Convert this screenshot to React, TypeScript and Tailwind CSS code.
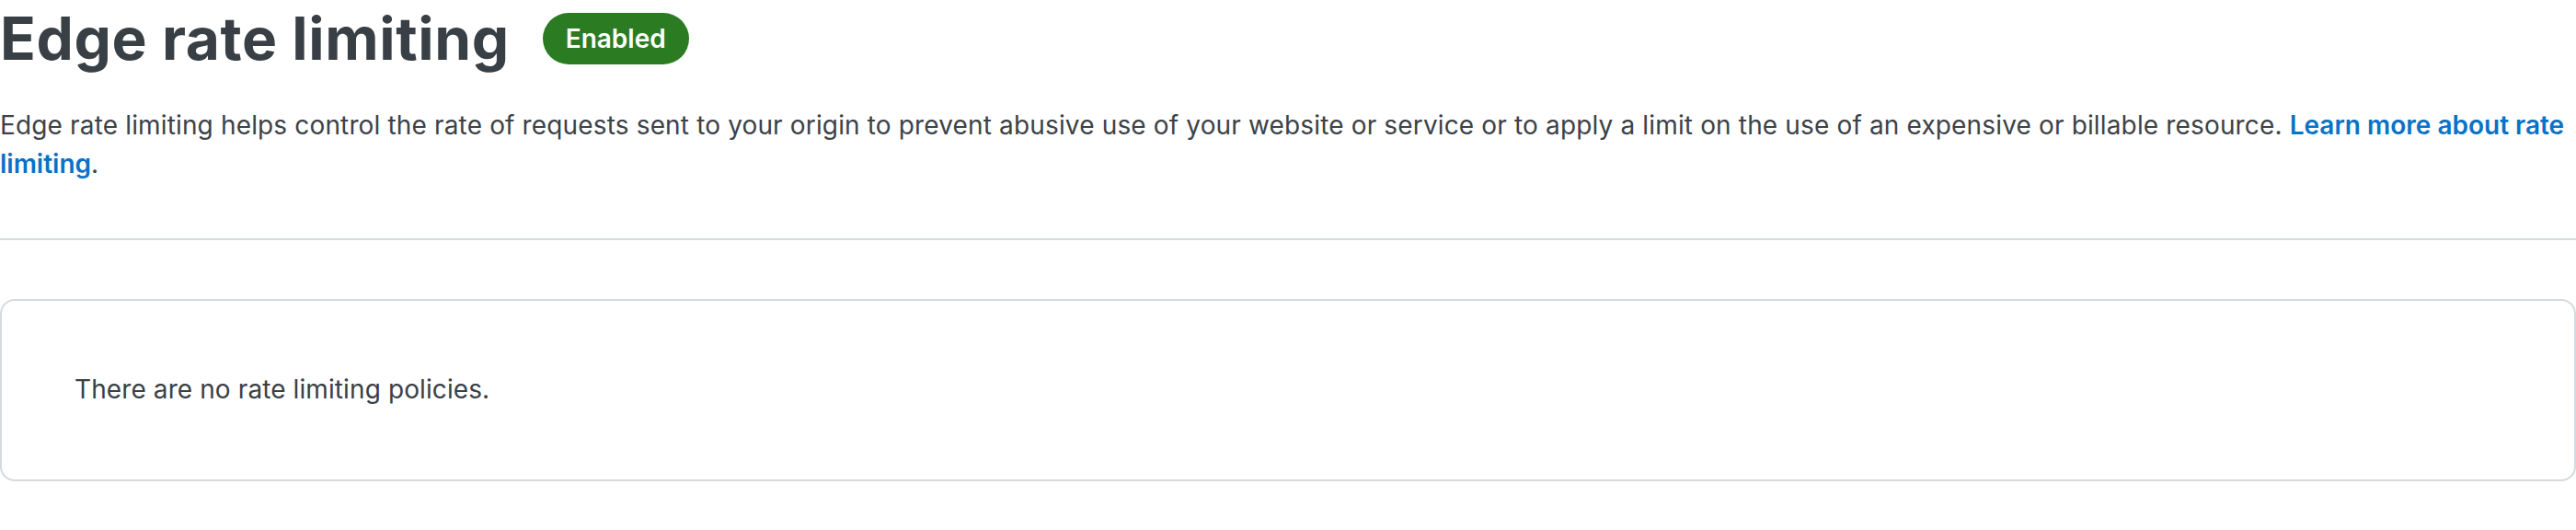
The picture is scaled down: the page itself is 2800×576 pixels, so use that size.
import React from 'react';

const StatusBadge: React.FC<{ label: string }> = ({ label }) => (
  <span className="inline-flex items-center rounded-full bg-[#2a7b22] px-[25px] py-[7px] text-[28px] leading-[42px] font-semibold text-white">
    {label}
  </span>
);

const EmptyPolicies: React.FC = () => (
  <div className="mt-[64px] rounded-[16px] border-2 border-[#d6dadd] pt-[75px] pb-[77px] px-[79px]">
    <p className="text-[28px] leading-[42px] tracking-[0.1px] text-[#3a4045]">There are no rate limiting policies.</p>
  </div>
);

const App: React.FC = () => {
  return (
    <div className="w-[2800px] bg-white font-['Inter',sans-serif] text-[#3a4045]">
      <div className="flex items-center gap-[36px]">
        <h1 className="text-[64px] leading-[84px] font-bold tracking-[0.6px] text-[#394045]">Edge rate limiting</h1>
        <StatusBadge label="Enabled" />
      </div>

      <p className="mt-[31px] text-[28px] leading-[42px] tracking-[0.15px] text-[#3c4247]">
        Edge rate limiting helps control the rate of requests sent to your origin to prevent abusive use of your website
        or service or to apply a limit on the use of an expensive or billable resource.{' '}
        <a href="#" className="font-semibold tracking-normal text-[#0a72c6]">
          Learn more about rate limiting
        </a>
        .
      </p>

      <hr className="mt-[60px] border-t-2 border-[#d6dadd]" />

      <EmptyPolicies />
    </div>
  );
};

export default App;
